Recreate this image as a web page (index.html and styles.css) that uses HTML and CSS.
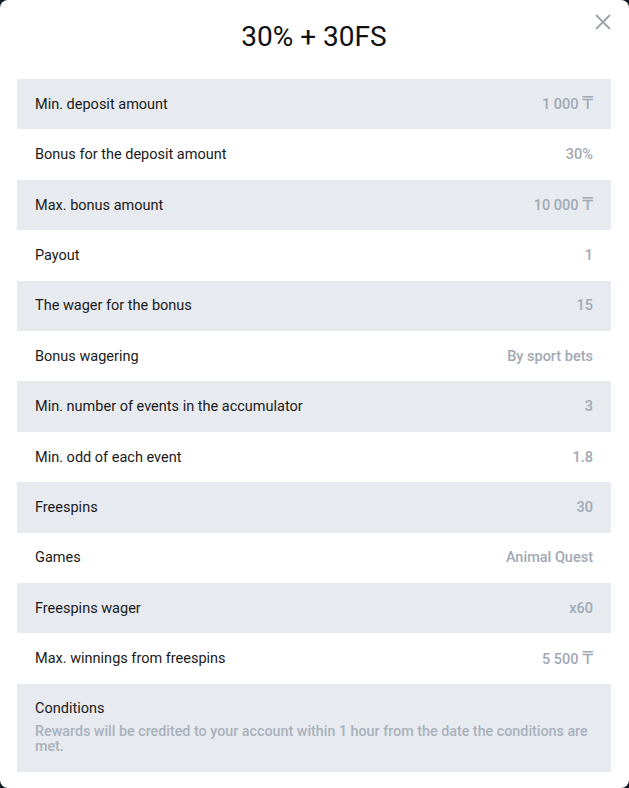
FILE: index.html
```html
<!DOCTYPE html>
<html>
<head>
    <link rel="stylesheet" href="styles.css">
</head>
<body>
    <div class="modal">
        <button class="close_btn" aria-label="Close">
            <svg width="16" height="16" viewBox="0 0 16 16">
                <path d="M1 1 L15 15 M15 1 L1 15" stroke="#9ba3ad" stroke-width="1.8" fill="none"/>
            </svg>
        </button>
        <h2 class="modal_title">30% + 30FS</h2>

        <!-- Bonus details -->
        <div class="bonus_table">
            <div class="bonus_row"><span class="label">Min. deposit amount</span><span class="value">1 000 <span class="cur">₸</span></span></div>
            <div class="bonus_row"><span class="label">Bonus for the deposit amount</span><span class="value">30%</span></div>
            <div class="bonus_row"><span class="label">Max. bonus amount</span><span class="value">10 000 <span class="cur">₸</span></span></div>
            <div class="bonus_row"><span class="label">Payout</span><span class="value">1</span></div>
            <div class="bonus_row"><span class="label">The wager for the bonus</span><span class="value">15</span></div>
            <div class="bonus_row"><span class="label">Bonus wagering</span><span class="value">By sport bets</span></div>
            <div class="bonus_row"><span class="label">Min. number of events in the accumulator</span><span class="value">3</span></div>
            <div class="bonus_row"><span class="label">Min. odd of each event</span><span class="value">1.8</span></div>
            <div class="bonus_row"><span class="label">Freespins</span><span class="value">30</span></div>
            <div class="bonus_row"><span class="label">Games</span><span class="value">Animal Quest</span></div>
            <div class="bonus_row"><span class="label">Freespins wager</span><span class="value">x60</span></div>
            <div class="bonus_row"><span class="label">Max. winnings from freespins</span><span class="value">5 500 <span class="cur">₸</span></span></div>
            <div class="conditions">
                <p class="label">Conditions</p>
                <p class="cond_text">Rewards will be credited to your account within 1 hour from the date the conditions are met.</p>
            </div>
        </div>
    </div>
</body>
</html>
```

FILE: styles.css
```css
body {
    margin: 0;
    background-color: #0f1a28; /* dark overlay */
    font-family: 'Roboto', 'Liberation Sans', sans-serif;
    color: #1a1a1a;
}

.modal {
    position: relative;
    box-sizing: border-box;
    height: 788px;
    background-color: #fff;
    border-radius: 8px;
    padding: 19px 18px 0 17px;
}

.close_btn {
    position: absolute;
    top: 14px;
    right: 18px;
    padding: 0;
    border: none;
    background: none;
    cursor: pointer;
    line-height: 0;
}

.modal_title {
    margin: 0 0 24px;
    text-align: center;
    font-size: 28px;
    font-weight: 400;
    line-height: 36px;
    color: #111;
}

.bonus_row {
    display: flex;
    justify-content: space-between;
    align-items: center;
    height: 50.42px;
    padding: 0 18px;
    font-size: 14.5px;
}

.bonus_row:nth-child(odd) {
    background-color: #e7eaef;
}

.value {
    font-weight: 500;
    color: #a1a9b4;
}

.cur {
    font-family: 'DejaVu Sans', sans-serif;
    font-weight: 400;
    font-size: 17px;
    line-height: 1;
}

.conditions {
    background-color: #e7eaef;
    padding: 17px 18px 19px;
    height: 88px;
    box-sizing: border-box;
    font-size: 14.5px;
}

.conditions p {
    margin: 0;
}

.conditions .label {
    line-height: 16px;
    margin-bottom: 7px;
}

.cond_text {
    font-size: 14.3px;
    font-weight: 500;
    color: #a9b1bc;
    line-height: 15px;
}
```
